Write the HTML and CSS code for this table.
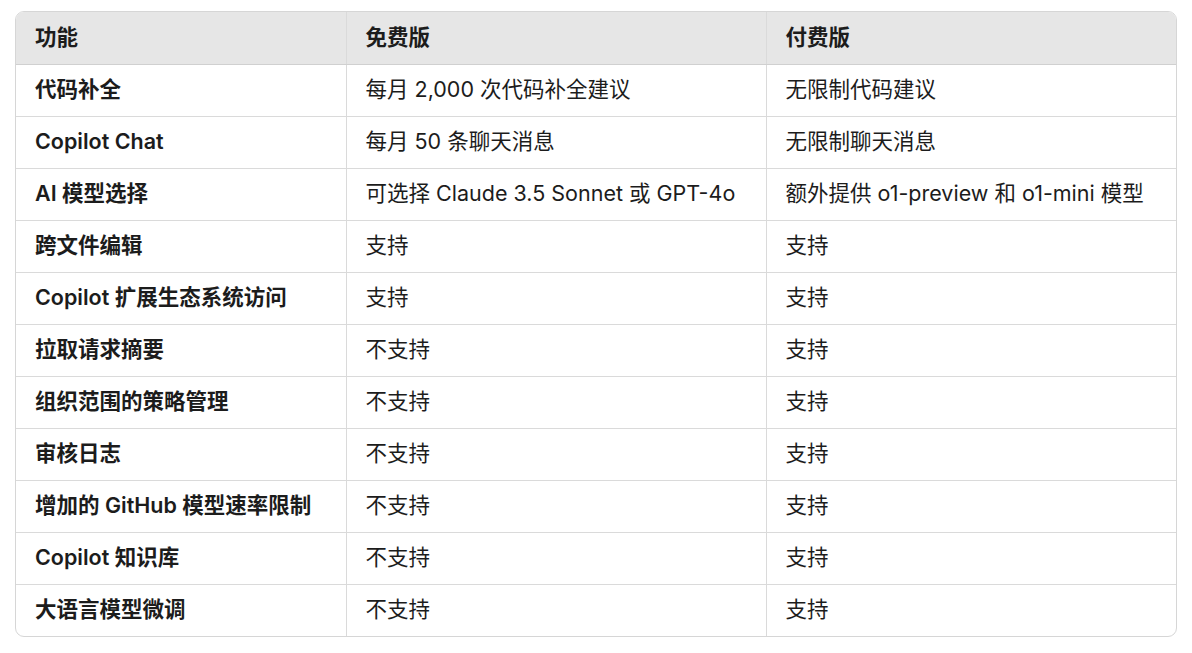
FILE: index.html
```html
<!DOCTYPE html>
<html lang="zh-CN">
<head>
<meta charset="utf-8">
<link rel="stylesheet" href="styles.css">
</head>
<body>
<div class="wrap">
<table class="cmp">
<colgroup><col class="c1"><col class="c2"><col class="c3"></colgroup>
<thead>
<tr><th>功能</th><th>免费版</th><th>付费版</th></tr>
</thead>
<tbody>
<tr><td>代码补全</td><td>每月 2,000 次代码补全建议</td><td>无限制代码建议</td></tr>
<tr><td>Copilot Chat</td><td>每月 50 条聊天消息</td><td>无限制聊天消息</td></tr>
<tr><td>AI 模型选择</td><td>可选择 Claude 3.5 Sonnet 或 GPT-4o</td><td>额外提供 o1-preview 和 o1-mini 模型</td></tr>
<tr><td>跨文件编辑</td><td>支持</td><td>支持</td></tr>
<tr><td>Copilot 扩展生态系统访问</td><td>支持</td><td>支持</td></tr>
<tr><td>拉取请求摘要</td><td>不支持</td><td>支持</td></tr>
<tr><td>组织范围的策略管理</td><td>不支持</td><td>支持</td></tr>
<tr><td>审核日志</td><td>不支持</td><td>支持</td></tr>
<tr><td>增加的 GitHub 模型速率限制</td><td>不支持</td><td>支持</td></tr>
<tr><td>Copilot 知识库</td><td>不支持</td><td>支持</td></tr>
<tr><td>大语言模型微调</td><td>不支持</td><td>支持</td></tr>
</tbody>
</table>
</div>
</body>
</html>
```
FILE: styles.css
```css
html, body {
  margin: 0;
  padding: 0;
  background: #ffffff;
}
body {
  padding: 11px 15px;
  font-family: Inter, "Noto Sans CJK SC", sans-serif;
  color: #1c1c1c;
}
.wrap {
  width: 1162px;
  box-sizing: border-box;
  border: 1px solid #d6d6d6;
  border-radius: 9px;
  overflow: hidden;
}
.cmp {
  width: 100%;
  border-collapse: collapse;
  table-layout: fixed;
}
.c1 { width: 330px; }
.c2 { width: 420px; }
.c3 { width: auto; }
.cmp th, .cmp td {
  height: 52px;
  box-sizing: border-box;
  padding: 0 19px;
  text-align: left;
  font-size: 21.5px;
  line-height: 1.2;
  border-right: 1px solid #dadada;
  border-bottom: 1px solid #dadada;
  white-space: nowrap;
}
.cmp th:last-child, .cmp td:last-child { border-right: none; }
.cmp tbody tr:last-child td { border-bottom: none; }
.cmp thead th {
  background: #e6e6e6;
  font-weight: 600;
  border-bottom-color: #d0d0d0;
}
.cmp td:first-child {
  font-weight: 600;
}
.cmp td { font-weight: 400; }
```
